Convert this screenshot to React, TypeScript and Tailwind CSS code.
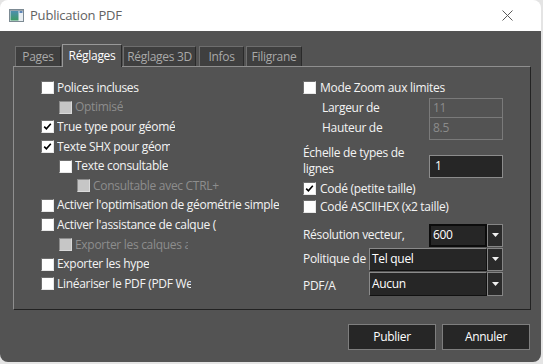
const font = "font-['Open_Sans','Noto_Sans',sans-serif]";

function Check({ checked = false, disabled = false }: { checked?: boolean; disabled?: boolean }) {
  return (
    <span
      className={`w-[13px] h-[13px] shrink-0 flex items-center justify-center border-t border-l border-r border-b ${
        disabled
          ? "bg-[#c6c6c6] border-t-[#8c8c8c] border-l-[#8c8c8c] border-r-[#dadada] border-b-[#dadada]"
          : "bg-white border-t-[#6f6f6f] border-l-[#6f6f6f] border-r-[#e8e8e8] border-b-[#e8e8e8]"
      }`}
    >
      {checked && (
        <svg width="9" height="9" viewBox="0 0 9 9">
          <path d="M1.2 4.6 L3.4 6.8 L7.8 1.8" stroke="#000" strokeWidth="1.6" fill="none" />
        </svg>
      )}
    </span>
  );
}

type Row = { label: string; level?: number; checked?: boolean; disabled?: boolean; clip?: number };

const leftRows: Row[] = [
  { label: "Polices incluses" },
  { label: "Optimisé", level: 1, disabled: true },
  { label: "True type pour géométrie", checked: true, clip: 118 },
  { label: "Texte SHX pour géométrie", checked: true, clip: 113 },
  { label: "Texte consultable", level: 1 },
  { label: "Consultable avec CTRL+", level: 2, disabled: true },
  { label: "Activer l'optimisation de géométrie simple" },
  { label: "Activer l'assistance de calque (", clip: 160 },
  { label: "Exporter les calques avec", level: 1, disabled: true, clip: 113 },
  { label: "Exporter les hype" },
  { label: "Linéariser le PDF (PDF Web)", clip: 134 },
];

function CheckRow({ label, level = 0, checked, disabled, clip }: Row) {
  const indent = level === 2 ? "pl-[36px]" : level === 1 ? "pl-[18px]" : "";
  return (
    <div className={`h-[19.6px] flex items-center ${indent}`}>
      <Check checked={checked} disabled={disabled} />
      <span
        className={`ml-[3px] whitespace-nowrap overflow-hidden ${disabled ? "text-[#8d8d8d]" : "text-[#f4f4f4]"}`}
        style={clip ? { width: clip } : undefined}
      >
        {label}
      </span>
    </div>
  );
}

function Arrow() {
  return (
    <svg width="7" height="4" viewBox="0 0 7 4">
      <path d="M0 0 H7 L3.5 4 Z" fill="#f0f0f0" />
    </svg>
  );
}

function Combo({ value, width, height, dark }: { value: string; width: string; height: string; dark?: boolean }) {
  return (
    <div className={`flex ${width} ${height}`}>
      <div
        className={`flex-1 flex items-center pl-[2px] bg-[#262626] text-white ${
          dark ? "border-2 border-[#0c0c0c]" : "border border-t-[#8a8a8a] border-l-[#8a8a8a] border-r-[#111] border-b-[#111]"
        }`}
      >
        {value}
      </div>
      <div className="w-[16px] flex items-center justify-center bg-[#2a2a2a] border border-[#858585]">
        <Arrow />
      </div>
    </div>
  );
}

function Tab({ label, active, w, ml }: { label: string; active?: boolean; w: string; ml: string }) {
  return (
    <div
      className={`${w} ${ml} flex items-center justify-center border-t border-l border-r ${
        active
          ? "h-[23px] -mb-px relative z-10 bg-[#535353] text-white border-t-[#999] border-l-[#999] border-r-[#2a2a2a]"
          : "h-[20px] bg-[#3f3f3f] text-[#a9a9a9] border-t-[#6e6e6e] border-l-[#6e6e6e] border-r-[#2a2a2a]"
      }`}
    >
      {label}
    </div>
  );
}

export default function App() {
  return (
    <div className={`w-[543px] h-[364px] bg-[#e4e4e4] ${font} text-[12px] tracking-[-0.3px]`}>
      <div className="w-[541px] h-[362px] flex flex-col rounded-[8px] overflow-hidden">
        <div className="h-[31px] bg-white flex items-center pl-[9px] pr-[28px] shrink-0">
          <svg width="15" height="13" viewBox="0 0 15 13">
            <rect x="0.5" y="0.5" width="14" height="12" fill="#e8eef2" stroke="#7c8a93" />
            <defs>
              <linearGradient id="g" x1="0" y1="0" x2="0" y2="1">
                <stop offset="0" stopColor="#4d8fb0" />
                <stop offset="1" stopColor="#3c9a62" />
              </linearGradient>
            </defs>
            <rect x="1.5" y="2" width="8" height="9.5" fill="url(#g)" />
            <rect x="10.5" y="2" width="3" height="2" fill="#5e86b8" />
            <rect x="1" y="1" width="13" height="1" fill="#9aa6ad" />
          </svg>
          <span className="ml-[6px] text-[13px] tracking-[-0.2px] text-[#626262]">Publication PDF</span>
          <div className="flex-1" />
          <svg width="11" height="11" viewBox="0 0 11 11">
            <path d="M0.5 0.5 L10.5 10.5 M10.5 0.5 L0.5 10.5" stroke="#5a5a5a" strokeWidth="1" />
          </svg>
        </div>

        <div className="flex-1 bg-[#535353] pl-[13px] pr-[10px]">
          <div className="pt-[13px] h-[35px] flex items-end">
            <Tab label="Pages" w="w-[46px]" ml="ml-[2px]" />
            <Tab label="Réglages" active w="w-[60px]" ml="ml-[1px]" />
            <Tab label="Réglages 3D" w="w-[73px]" ml="ml-[1px]" />
            <Tab label="Infos" w="w-[45px]" ml="ml-[3px]" />
            <Tab label="Filigrane" w="w-[56px]" ml="ml-[2px]" />
          </div>

          <div className="w-[518px] h-[244px] border border-t-[#8f8f8f] border-l-[#8f8f8f] border-r-[#222] border-b-[#222] pt-[11px] pl-[27px] flex">
            <div className="w-[262px] flex flex-col">
              {leftRows.map((r) => (
                <CheckRow key={r.label} {...r} />
              ))}
            </div>

            <div className="w-[200px] flex flex-col text-[#f4f4f4]">
              <div className="h-[19.6px] flex items-center">
                <Check />
                <span className="ml-[4px]">Mode Zoom aux limites</span>
              </div>
              <div className="flex items-center h-[20px] mt-[0.4px]">
                <span className="w-[126px] pl-[19px]">Largeur de</span>
                <div className="w-[74px] h-[20px] border border-[#7a7a7a] flex items-center pl-[3px] text-[#8b8b8b]">11</div>
              </div>
              <div className="flex items-center h-[23px] -mt-px">
                <span className="w-[126px] pl-[19px]">Hauteur de</span>
                <div className="w-[74px] h-[23px] border border-[#7a7a7a] flex items-center pl-[3px] text-[#8b8b8b]">8.5</div>
              </div>
              <div className="flex items-end mt-[5px]">
                <div className="w-[126px] mb-[1px] flex flex-col">
                  <div className="h-[16px] leading-[16px] whitespace-nowrap">Échelle de types de</div>
                  <div className="h-[16px] leading-[16px]">lignes</div>
                </div>
                <div className="w-[74px] h-[23px] bg-[#262626] border border-[#8c8c8c] flex items-center pl-[5px] text-white">1</div>
              </div>
              <div className="h-[18px] mt-[2px] flex items-center">
                <Check checked />
                <span className="ml-[4px]">Codé (petite taille)</span>
              </div>
              <div className="h-[18px] flex items-center">
                <Check />
                <span className="ml-[4px]">Codé ASCIIHEX (x2 taille)</span>
              </div>
              <div className="flex items-center h-[23px] mt-[8px]">
                <span className="w-[126px]">Résolution vecteur,</span>
                <Combo value="600" width="w-[74px]" height="h-[23px]" dark />
              </div>
              <div className="flex items-center h-[23px] mt-[1px]">
                <span className="w-[66px] whitespace-nowrap overflow-hidden">Politique de</span>
                <Combo value="Tel quel" width="w-[134px]" height="h-[23px]" />
              </div>
              <div className="flex items-center h-[24px] mt-[1px]">
                <span className="w-[66px] mt-[4px]">PDF/A</span>
                <Combo value="Aucun" width="w-[134px]" height="h-[24px]" />
              </div>
            </div>
          </div>

          <div className="mt-[14px] flex justify-end gap-[6px] w-[518px] pr-[1px]">
            <button className="w-[88px] h-[26px] bg-[#262626] border border-[#7e7e7e] text-white">Publier</button>
            <button className="w-[88px] h-[26px] bg-[#262626] border border-[#7e7e7e] text-white">Annuler</button>
          </div>
        </div>
      </div>
    </div>
  );
}
